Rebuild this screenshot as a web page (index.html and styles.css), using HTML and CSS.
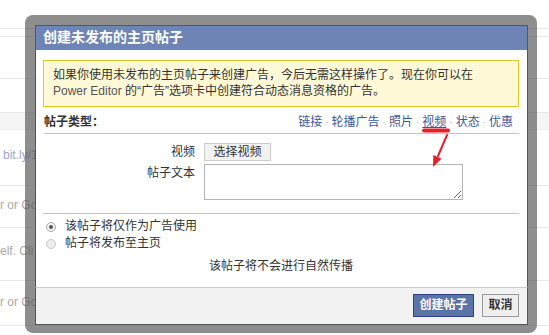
FILE: index.html
```html
<!DOCTYPE html>
<html lang="zh-CN">
<head>
<meta charset="utf-8">
<title>创建未发布的主页帖子</title>
<link rel="stylesheet" href="styles.css">
</head>
<body>
<div class="page">
  <div class="row r1"></div>
  <div class="row r2"></div>
  <div class="row r3"></div>
  <div class="row r4"></div>
  <div class="row r5"></div>
  <div class="row r6"><span class="bgtext link">bit.ly/1gK</span></div>
  <div class="row r7"><span class="bgtext">r or Go</span></div>
  <div class="row r8"><span class="bgtext">elf. Cli</span></div>
  <div class="row r9"><span class="bgtext">r or Go</span></div>
</div>

<div class="frame">
  <div class="dlg">
    <div class="dlg-title">创建未发布的主页帖子</div>
    <div class="dlg-body">
      <div class="notice">如果你使用未发布的主页帖子来创建广告，今后无需这样操作了。现在你可以在<br><span class="latin">Power Editor</span> 的“广告”选项卡中创建符合动态消息资格的广告。</div>
      <div class="type-row">
        <span class="type-label">帖子类型：</span>
        <span class="type-links">
          <a class="tl">链接</a><span class="sep">·</span><a class="tl">轮播广告</a><span class="sep">·</span><a class="tl">照片</a><span class="sep">·</span><a class="tl active">视频</a><span class="sep">·</span><a class="tl">状态</a><span class="sep">·</span><a class="tl">优惠</a>
        </span>
      </div>
      <div class="form">
        <div class="flabel">视频</div>
        <div class="fval"><span class="btn-choose">选择视频</span></div>
        <div class="flabel">帖子文本</div>
        <div class="fval"><textarea class="ta"></textarea></div>
      </div>
      <div class="radios">
        <div class="radio-row"><span class="radio checked"></span><span>该帖子将仅作为广告使用</span></div>
        <div class="radio-row"><span class="radio"></span><span>帖子将发布至主页</span></div>
      </div>
      <div class="note">该帖子将不会进行自然传播</div>
    </div>
    <div class="dlg-foot">
      <span class="btn primary">创建帖子</span>
      <span class="btn">取消</span>
    </div>
  </div>
</div>

<svg class="annot" width="549" height="335" viewBox="0 0 549 335">
  <line x1="424" y1="130.5" x2="448" y2="130.5" stroke="#e8202a" stroke-width="4" stroke-linecap="round"/>
  <line x1="447" y1="135" x2="438" y2="156" stroke="#e8202a" stroke-width="2" stroke-linecap="round"/>
  <polygon points="433,167 433.3,155.1 441.5,158.7" fill="#e8202a"/>
</svg>
</body>
</html>
```
FILE: styles.css
```css
* { box-sizing: border-box; }
html, body { margin: 0; padding: 0; }
body {
  width: 549px;
  height: 335px;
  overflow: hidden;
  position: relative;
  background: #fff;
  font-family: "Liberation Sans", "Noto Sans CJK SC", sans-serif;
  font-size: 12px;
  color: #333;
}

/* background page */
.page { width: 549px; }
.row { border-bottom: 1px solid #e8e8e8; white-space: nowrap; }
.r1 { height: 29px; }
.r2 { height: 8px; }
.r3 { height: 42px; }
.r4 { height: 34px; }
.r5 { height: 17px; background: #f5f5f5; border-bottom-color: #eee; }
.r6 { height: 56px; padding-top: 18px; padding-left: 3px; }
.r7 { height: 42px; padding-top: 12px; }
.r8 { height: 53px; padding-top: 16px; }
.r9 { height: 45px; padding-top: 14px; }
.bgtext { color: #aaa; font-family: "Liberation Sans", sans-serif; font-size: 12px; }
.bgtext.link { color: #9aa6cc; }

/* modal frame */
.frame {
  position: absolute;
  left: 25px;
  top: 15px;
  width: 512px;
  height: 318px;
  padding: 10px 9px 8px 10px;
  border-radius: 8px;
  background: rgba(82, 82, 82, 0.65);
}
.dlg {
  width: 493px;
  height: 300px;
  display: flex;
  flex-direction: column;
  background: #fff;
}
.dlg-title {
  height: 25px;
  line-height: 22px;
  padding-left: 7px;
  background: #6d84b4;
  border: 1px solid #3b5998;
  border-bottom: 0;
  color: #fff;
  font-size: 14px;
  font-weight: bold;
}
.dlg-body {
  flex: 1;
  border-left: 1px solid #555;
  border-right: 1px solid #555;
  padding: 10px 8px 0 7px;
}
.notice {
  height: 47px;
  background: #fff9d7;
  border: 1px solid #e2c822;
  padding: 6px 9px 0 9px;
  line-height: 16px;
  color: #333;
}
.latin { font-family: "Liberation Sans", sans-serif; color: #555; }

.type-row {
  margin-top: 6px;
  margin-left: 1px;
  height: 21px;
  border-bottom: 1px solid #c4c4c4;
  display: flex;
  justify-content: space-between;
  align-items: flex-start;
  line-height: 18px;
}
.type-label { font-weight: bold; color: #333; }
.type-links { padding-right: 6px; }
.tl { color: #3b5998; text-decoration: none; }
.tl.active { text-decoration: underline; }
.sep { color: #aaa; margin: 0 3px; font-size: 10px; }

.form {
  margin-top: 9px;
  display: grid;
  grid-template-columns: 152px 1fr;
  column-gap: 9px;
  row-gap: 3px;
}
.flabel { text-align: right; color: #333; line-height: 16px; padding-top: 1px; }
.fval { display: flex; }
.btn-choose {
  display: inline-block;
  height: 18px;
  width: 67px;
  line-height: 16px;
  text-align: center;
  background: #f2f2f2;
  border: 1px solid #ccc;
  color: #333;
}
.ta {
  width: 259px;
  height: 36px;
  margin: 0;
  border: 1px solid #b4b4b4;
  padding: 2px;
  font: inherit;
  resize: both;
  display: block;
}

.radios {
  margin-top: 13px;
  border-top: 1px solid #c4c4c4;
  padding-top: 4px;
}
.radio-row {
  height: 17px;
  display: flex;
  align-items: center;
  gap: 9px;
  padding-left: 3px;
  line-height: 17px;
}
.radio {
  width: 10px;
  height: 10px;
  border-radius: 50%;
  border: 1px solid #c8c8c8;
  background: #eee;
  position: relative;
  flex: none;
}
.radio.checked { border-color: #aaa; background: #f4f4f4; }
.radio.checked::after {
  content: "";
  position: absolute;
  left: 2px;
  top: 2px;
  width: 4px;
  height: 4px;
  border-radius: 50%;
  background: #555;
}
.note {
  margin-top: 6px;
  text-align: center;
  line-height: 17px;
  color: #333;
}

.dlg-foot {
  height: 38px;
  background: #f2f2f2;
  border: 1px solid #555;
  border-top: 1px solid #ccc;
  display: flex;
  justify-content: flex-end;
  align-items: flex-start;
  gap: 8px;
  padding: 6px 8px 0 0;
}
.btn {
  display: inline-block;
  height: 23px;
  width: 37px;
  line-height: 21px;
  text-align: center;
  background: #eee;
  border: 1px solid #999;
  color: #333;
  font-weight: bold;
}
.btn.primary {
  width: 61px;
  background: #5b74a8;
  border-color: #29447e;
  color: #fff;
}

.annot {
  position: absolute;
  left: 0;
  top: 0;
  pointer-events: none;
}
```
